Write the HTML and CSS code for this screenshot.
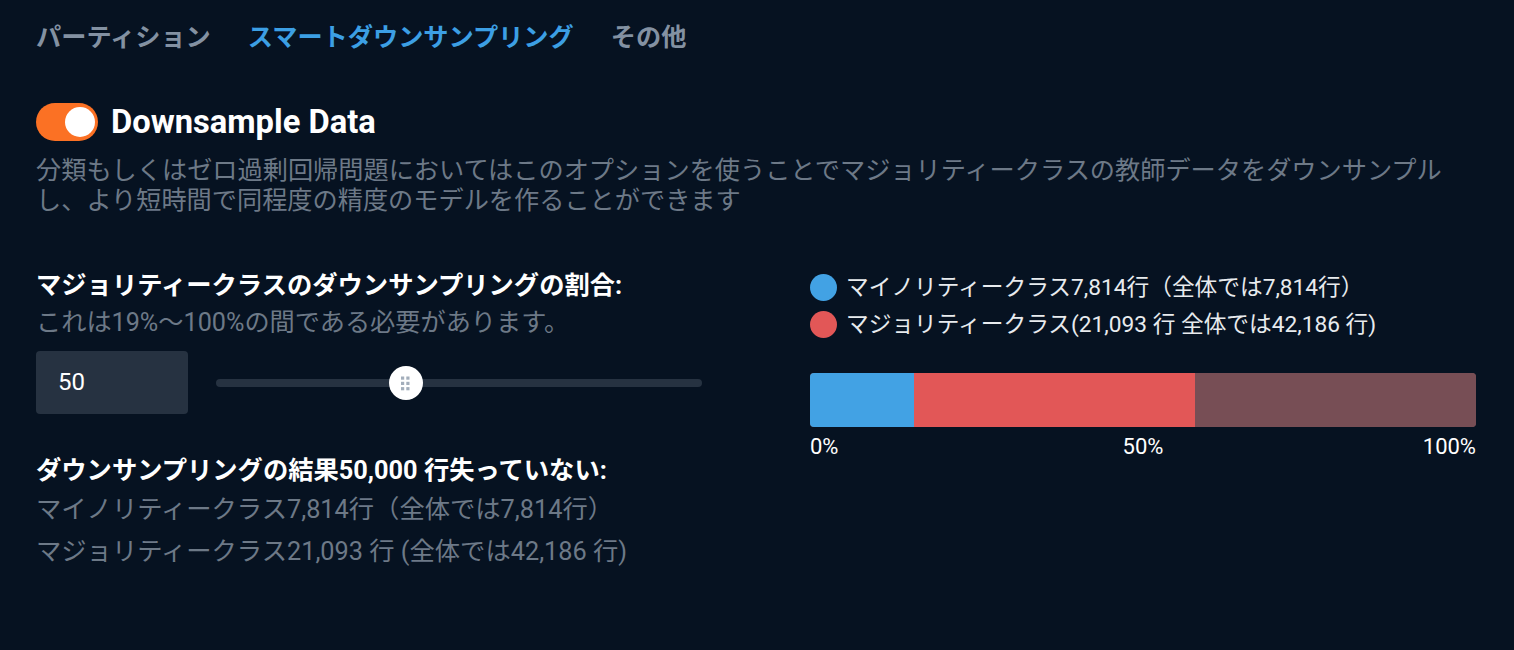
FILE: index.html
```html
<!DOCTYPE html>
<html lang="ja">
<head>
<meta charset="utf-8">
<link rel="stylesheet" href="styles.css">
</head>
<body>
<div class="page">
  <nav class="tabs">
    <span class="tab">パーティション</span>
    <span class="tab active">スマートダウンサンプリング</span>
    <span class="tab">その他</span>
  </nav>

  <div class="toggle-row">
    <span class="toggle"><span class="knob"></span></span>
    <h1 class="title">Downsample Data</h1>
  </div>
  <p class="desc">分類もしくはゼロ過剰回帰問題においてはこのオプションを使うことでマジョリティークラスの教師データをダウンサンプル<br>し、より短時間で同程度の精度のモデルを作ることができます</p>

  <div class="columns">
    <section class="left">
      <div class="label">マジョリティークラスのダウンサンプリングの割合:</div>
      <div class="sub">これは19%〜100%の間である必要があります。</div>
      <div class="slider-row">
        <div class="num-input">50</div>
        <div class="track">
          <span class="thumb" style="left: 39%">
            <svg width="12" height="16" viewBox="0 0 12 16">
              <g fill="#a3aebb">
                <rect x="1" y="1.5" width="3.2" height="3.2"/><rect x="6.3" y="1.5" width="3.2" height="3.2"/>
                <rect x="1" y="6.8" width="3.2" height="3.2"/><rect x="6.3" y="6.8" width="3.2" height="3.2"/>
                <rect x="1" y="12.1" width="3.2" height="3.2"/><rect x="6.3" y="12.1" width="3.2" height="3.2"/>
              </g>
            </svg>
          </span>
        </div>
      </div>
      <div class="label result-label">ダウンサンプリングの結果50,000 行失っていない:</div>
      <div class="result-line">マイノリティークラス7,814行（全体では7,814行）</div>
      <div class="result-line">マジョリティークラス21,093 行 (全体では42,186 行)</div>
    </section>

    <section class="right">
      <div class="legend-item"><span class="dot blue"></span>マイノリティークラス7,814行（全体では7,814行）</div>
      <div class="legend-item"><span class="dot red"></span>マジョリティークラス(21,093 行 全体では42,186 行)</div>
      <div class="bar">
        <span class="seg seg-blue" style="width: 15.6%"></span>
        <span class="seg seg-red" style="width: 42.2%"></span>
        <span class="seg seg-rest"></span>
      </div>
      <div class="scale">
        <span class="s-left">0%</span>
        <span class="s-mid">50%</span>
        <span class="s-right">100%</span>
      </div>
    </section>
  </div>
</div>
</body>
</html>
```

FILE: styles.css
```css
* { box-sizing: border-box; }
html, body {
  margin: 0;
  padding: 0;
  background: #061221;
  height: 100%;
}
body {
  font-family: Roboto, "Noto Sans CJK JP", sans-serif;
  color: #ffffff;
}
.page {
  width: 1440px;
  margin-left: 36px;
}
.tabs {
  display: flex;
  gap: 37px;
  padding-top: 20px;
}
.tab {
  font-size: 25.2px;
  font-weight: 700;
  line-height: 36px;
  color: #8391a2;
}
.tab.active { color: #3c9fe4; }

.toggle-row {
  display: flex;
  align-items: center;
  gap: 13px;
  margin-top: 47px;
  height: 38px;
}
.toggle {
  position: relative;
  width: 62px;
  height: 38px;
  border-radius: 19px;
  background: #fb7124;
  flex: none;
}
.knob {
  position: absolute;
  right: 3px;
  top: 4px;
  width: 30px;
  height: 30px;
  border-radius: 50%;
  background: #ffffff;
}
.title {
  margin: 0;
  font-size: 32.7px;
  font-weight: 700;
  line-height: 38px;
  color: #ffffff;
}
.desc {
  margin: 15px 0 0;
  font-size: 25.2px;
  line-height: 30px;
  color: #6d7987;
}

.columns {
  display: grid;
  grid-template-columns: 666px 666px;
  column-gap: 108px;
  margin-top: 52px;
}
.label {
  font-size: 25.3px;
  font-weight: 700;
  line-height: 36px;
  color: #ffffff;
}
.sub {
  margin-top: 1px;
  font-size: 25.2px;
  line-height: 36px;
  color: #6d7987;
}
.slider-row {
  display: flex;
  align-items: center;
  gap: 28px;
  margin-top: 10px;
}
.num-input {
  width: 152px;
  height: 63px;
  border-radius: 4px;
  background: #263241;
  font-size: 24px;
  line-height: 63px;
  padding-left: 22px;
  color: #ffffff;
  flex: none;
}
.track {
  position: relative;
  flex: 1;
  height: 8px;
  border-radius: 4px;
  background: #263241;
}
.thumb {
  position: absolute;
  top: 50%;
  width: 34px;
  height: 34px;
  margin-left: -17px;
  margin-top: -17px;
  border-radius: 50%;
  background: #ffffff;
  display: flex;
  align-items: center;
  justify-content: center;
}
.thumb svg { display: block; }
.result-label { margin-top: 39px; }
.result-line {
  font-size: 25.3px;
  line-height: 42px;
  color: #6d7987;
}
.result-line:first-of-type { margin-top: 3px; }

.right { padding-top: 1px; }
.legend-item {
  display: flex;
  align-items: center;
  gap: 9px;
  font-size: 22.7px;
  line-height: 37px;
  color: #e8ebee;
}
.dot {
  width: 27px;
  height: 27px;
  border-radius: 50%;
  flex: none;
}
.dot.blue { background: #42a2e4; }
.dot.red { background: #e25757; }
.bar {
  display: flex;
  height: 54px;
  margin-top: 30px;
  border-radius: 4px;
  overflow: hidden;
  background: #774e55;
}
.seg { height: 100%; }
.seg-blue { background: #42a2e4; }
.seg-red { background: #e25757; }
.seg-rest { flex: 1; background: #774e55; }
.scale {
  display: grid;
  grid-template-columns: 1fr auto 1fr;
  margin-top: 8px;
  font-size: 22px;
  line-height: 24px;
  color: #ffffff;
}
.s-left { justify-self: start; }
.s-mid { justify-self: center; }
.s-right { justify-self: end; }
```
